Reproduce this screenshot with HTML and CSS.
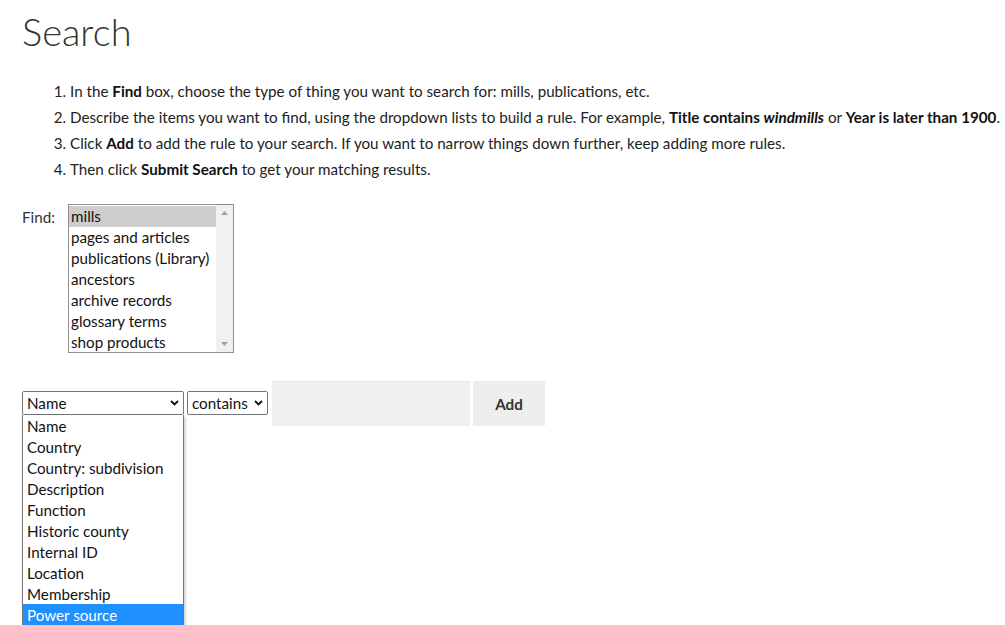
FILE: index.html
```html
<!DOCTYPE html>
<html>
<head>
<meta charset="utf-8">
<link rel="stylesheet" href="styles.css">
</head>
<body>
<div class="page">
  <h1 class="title">Search</h1>
  <ol class="steps">
    <li>In the <b>Find</b> box, choose the type of thing you want to search for: mills, publications, etc.</li>
    <li>Describe the items you want to find, using the dropdown lists to build a rule. For example, <b>Title contains <i>windmills</i></b> or <b>Year is later than 1900</b>.</li>
    <li>Click <b>Add</b> to add the rule to your search. If you want to narrow things down further, keep adding more rules.</li>
    <li>Then click <b>Submit Search</b> to get your matching results.</li>
  </ol>
  <div class="find">
    <span class="find-label">Find:</span>
    <div class="listbox">
      <div class="lb-options">
        <div class="lb-opt selected">mills</div>
        <div class="lb-opt">pages and articles</div>
        <div class="lb-opt">publications (Library)</div>
        <div class="lb-opt">ancestors</div>
        <div class="lb-opt">archive records</div>
        <div class="lb-opt">glossary terms</div>
        <div class="lb-opt">shop products</div>
      </div>
      <div class="lb-scroll">
        <svg width="7" height="4" viewBox="0 0 7 4"><path d="M0 4 L3.5 0 L7 4 Z" fill="#a3a3a3"/></svg>
        <svg width="7" height="4" viewBox="0 0 7 4"><path d="M0 0 L3.5 4 L7 0 Z" fill="#a3a3a3"/></svg>
      </div>
    </div>
  </div>
  <div class="rule">
    <div class="field-wrap">
      <div class="select sel-name">
        <span>Name</span>
        <svg class="chev" width="9" height="6" viewBox="0 0 9 6"><path d="M1 1 L4.5 4.5 L8 1" fill="none" stroke="#111" stroke-width="1.8"/></svg>
      </div>
      <div class="dropdown">
        <div class="dd-opt">Name</div>
        <div class="dd-opt">Country</div>
        <div class="dd-opt">Country: subdivision</div>
        <div class="dd-opt">Description</div>
        <div class="dd-opt">Function</div>
        <div class="dd-opt">Historic county</div>
        <div class="dd-opt">Internal ID</div>
        <div class="dd-opt">Location</div>
        <div class="dd-opt">Membership</div>
        <div class="dd-opt active">Power source</div>
      </div>
    </div>
    <div class="select sel-op">
      <span>contains</span>
      <svg class="chev" width="9" height="6" viewBox="0 0 9 6"><path d="M1 1 L4.5 4.5 L8 1" fill="none" stroke="#111" stroke-width="1.8"/></svg>
    </div>
    <div class="text-input"></div>
    <div class="add-btn">Add</div>
  </div>
</div>
</body>
</html>
```
FILE: styles.css
```css
html, body {
  margin: 0;
  padding: 0;
  background: #fff;
  overflow: hidden;
}
body {
  font-family: "Lato", "Open Sans", sans-serif;
  font-size: 15.2px;
  color: #222;
}
.page {
  padding: 0 0 0 22px;
  height: 625px;
}
.title {
  margin: 0;
  padding-top: 8px;
  font-family: "Lato", sans-serif;
  font-weight: 300;
  font-size: 38px;
  line-height: 46px;
  color: #333;
}
.steps {
  margin: 24px 0 0 0;
  padding-left: 48px;
  line-height: 26px;
}
.steps b {
  font-weight: 700;
  color: #111;
}
.find {
  display: flex;
  align-items: flex-start;
  margin-top: 22px;
}
.find-label {
  width: 46px;
  padding-top: 3px;
  line-height: 20px;
  color: #333;
}
.listbox {
  display: flex;
  width: 164px;
  height: 147px;
  border: 1px solid #8f8f8f;
  background: #fff;
}
.lb-options {
  flex: 1;
  padding-top: 1px;
}
.lb-opt {
  height: 21px;
  line-height: 21px;
  padding-left: 2px;
  color: #111;
  white-space: nowrap;
}
.lb-opt.selected {
  background: #cecece;
}
.lb-scroll {
  width: 17px;
  background: #f1f1f1;
  display: flex;
  flex-direction: column;
  justify-content: space-between;
  align-items: center;
  padding: 6px 0;
  box-sizing: border-box;
}
.rule {
  display: flex;
  align-items: flex-start;
  margin-top: 28px;
  gap: 3px;
}
.field-wrap {
  position: relative;
}
.select {
  box-sizing: border-box;
  height: 24px;
  margin-top: 10px;
  border: 1px solid #767676;
  border-radius: 2px;
  display: flex;
  align-items: center;
  justify-content: space-between;
  padding: 0 4px 0 4px;
  background: #fff;
  color: #111;
}
.sel-name {
  width: 162px;
}
.sel-op {
  width: 81px;
}
.chev {
  flex: none;
}
.dropdown {
  position: absolute;
  left: 0;
  top: 34px;
  width: 162px;
  box-sizing: border-box;
  border: 1px solid #767676;
  border-top: none;
  background: #fff;
  box-shadow: 1px 2px 3px rgba(0,0,0,0.25);
}
.dd-opt {
  height: 21px;
  line-height: 22px;
  padding-left: 4px;
  color: #111;
  white-space: nowrap;
}
.dd-opt.active {
  background: #1e90ff;
  color: #fff;
}
.text-input {
  width: 198px;
  height: 45px;
  background: #f0f0f0;
  border-top: 1px solid #e4e4e4;
  box-sizing: border-box;
  margin-left: 1px;
}
.add-btn {
  width: 72px;
  height: 45px;
  background: #eeeeee;
  display: flex;
  align-items: center;
  justify-content: center;
  font-weight: 700;
  color: #333;
}
```
